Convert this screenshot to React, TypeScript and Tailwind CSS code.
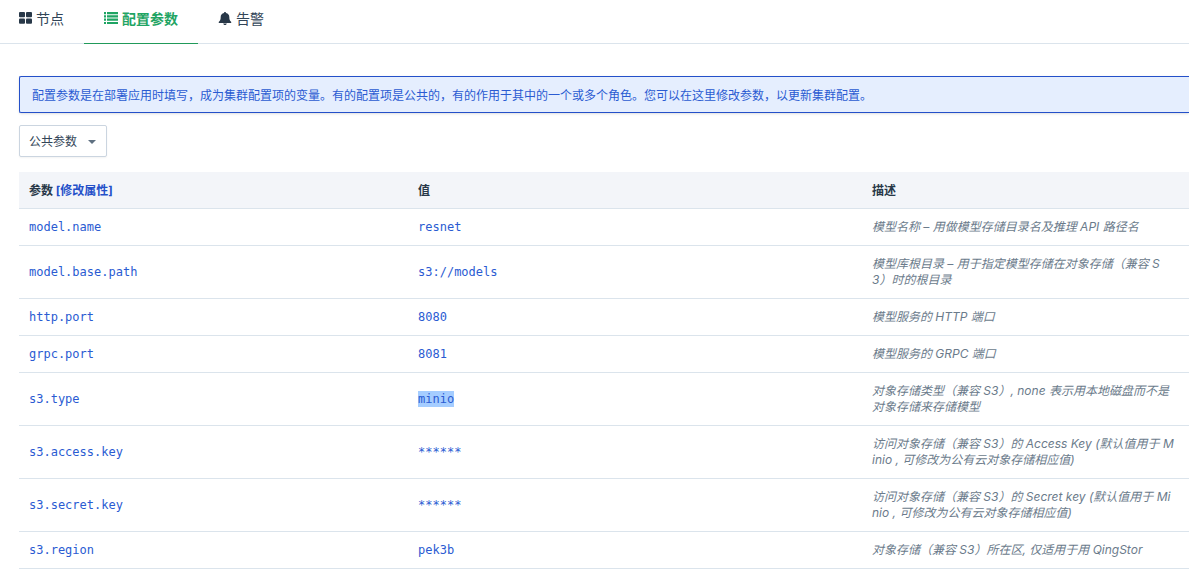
import { useState } from "react";

type Param = { name: string; value: string; desc: string; selected?: boolean };

const PARAMS: Param[] = [
  { name: "model.name", value: "resnet", desc: "模型名称 – 用做模型存储目录名及推理 API 路径名" },
  { name: "model.base.path", value: "s3://models", desc: "模型库根目录 – 用于指定模型存储在对象存储（兼容 S\n3）时的根目录" },
  { name: "http.port", value: "8080", desc: "模型服务的 HTTP 端口" },
  { name: "grpc.port", value: "8081", desc: "模型服务的 GRPC 端口" },
  { name: "s3.type", value: "minio", desc: "对象存储类型（兼容 S3）, none 表示用本地磁盘而不是对象存储来存储模型", selected: true },
  { name: "s3.access.key", value: "******", desc: "访问对象存储（兼容 S3）的 Access Key (默认值用于 Minio , 可修改为公有云对象存储相应值)" },
  { name: "s3.secret.key", value: "******", desc: "访问对象存储（兼容 S3）的 Secret key (默认值用于 Minio , 可修改为公有云对象存储相应值)" },
  { name: "s3.region", value: "pek3b", desc: "对象存储（兼容 S3）所在区, 仅适用于用 QingStor" },
];

const TABS = [
  { key: "nodes", label: "节点", icon: NodesIcon },
  { key: "params", label: "配置参数", icon: ListIcon },
  { key: "alarms", label: "告警", icon: BellIcon },
];

export default function App() {
  const [tab, setTab] = useState("params");
  const [role, setRole] = useState("common");

  return (
    <div className="min-h-screen overflow-x-hidden bg-white font-['Inter','Noto_Sans_CJK_SC',sans-serif] text-xs text-[#324558]">
      <nav className="flex border-b border-[#dbe4ec]">
        {TABS.map((t, i) => {
          const on = t.key === tab;
          return (
            <button
              key={t.key}
              type="button"
              onClick={() => setTab(t.key)}
              className={`-mb-px flex h-11 items-center gap-1 border-b pr-5 pb-[5px] text-sm ${i === 0 ? "pl-[18px]" : "pl-5"} ${
                on ? "border-[#219a5a] font-bold text-[#1fa463]" : "border-transparent"
              }`}
            >
              <t.icon />
              {t.label}
            </button>
          );
        })}
      </nav>

      <main className="pt-8 pl-[19px]">
        <p className="rounded-l-xs border border-r-0 border-[#2450c9] bg-[#e5eefe] px-3 pt-2.5 pb-2 leading-[17px] text-[#2a5bd2] shadow-sm">
          配置参数是在部署应用时填写，成为集群配置项的变量。有的配置项是公共的，有的作用于其中的一个或多个角色。您可以在这里修改参数，以更新集群配置。
        </p>

        <div className="relative mt-3 w-[88px]">
          <select
            aria-label="角色"
            value={role}
            onChange={(e) => setRole(e.target.value)}
            className="h-8 w-full appearance-none rounded-xs border border-[#cbd5e0] bg-white pt-0.5 pr-6 pl-[9px] shadow-xs"
          >
            <option value="common">公共参数</option>
          </select>
          <svg viewBox="0 0 8 4" className="pointer-events-none absolute top-[15px] right-[11px] h-1 w-2" fill="#5f7081">
            <path d="M0 0h8L4 4z" />
          </svg>
        </div>

        <table className="mt-[15px] w-full table-fixed border-collapse text-left leading-4">
          <colgroup>
            <col className="w-[33.25%]" />
            <col className="w-[38.8%]" />
            <col />
          </colgroup>
          <thead>
            <tr className="border-b border-[#dbe4ec] bg-[#f3f5f9] text-[#283848]">
              <th className="px-2.5 pt-[11px] pb-[9px] font-bold">
                参数 <a href="#edit" className="text-[#2450c9]">[修改属性]</a>
              </th>
              <th className="px-2.5 pt-[11px] pb-[9px] font-bold">值</th>
              <th className="px-2.5 pt-[11px] pb-[9px] font-bold">描述</th>
            </tr>
          </thead>
          <tbody>
            {PARAMS.map((p) => (
              <tr key={p.name} className="border-b border-[#dbe4ec]">
                <td className="p-2.5 font-['DejaVu_Sans_Mono',monospace] text-[#2a5bd2]">{p.name}</td>
                <td className="p-2.5 font-['DejaVu_Sans_Mono',monospace] text-[#2a5bd2]">
                  <span className={p.selected ? "block w-fit bg-[#a5cdff]" : "block w-fit"}>{p.value}</span>
                </td>
                <td className="py-2.5 pr-3.5 pl-2.5 break-all whitespace-pre-line text-[#6b7b8b] italic">{p.desc}</td>
              </tr>
            ))}
          </tbody>
        </table>
      </main>
    </div>
  );
}

function NodesIcon() {
  return (
    <svg viewBox="0 0 14 14" className="size-3.5" fill="#283848">
      <rect x="1" y="0" width="6" height="5.3" rx="1" />
      <rect x="8" y="0" width="6" height="5.3" rx="1" />
      <rect x="1" y="6.5" width="6" height="5.3" rx="1" />
      <rect x="8" y="6.5" width="6" height="5.3" rx="1" />
    </svg>
  );
}

function ListIcon() {
  return (
    <svg viewBox="0 0 14 14" className="size-3.5" fill="currentColor">
      <path d="M0 0h2v2.2H0zM3 0h11v2.2H3zM0 3.3h2v2.2H0zM3 3.3h11v2.2H3zM0 6.6h2v2.2H0zM3 6.6h11v2.2H3zM0 9.9h2v2.2H0zM3 9.9h11v2.2H3z" />
    </svg>
  );
}

function BellIcon() {
  return (
    <svg viewBox="0 0 14 14" className="size-3.5" fill="#283848">
      <path d="M7 0c.6 0 1 .4 1 1 2.2.4 3.3 2 3.3 3.9 0 2.8.6 3.8 1.8 4.8.5.5.2 1.3-.5 1.3H1.4c-.7 0-1-.8-.5-1.300C2.100 8.700 2.700 7.700 2.700 4.900 2.700 3 3.800 1.400 6 1c0-.6.4-1 1-1zM5.200 11.500h3.600c0 .9-.8 1.500-1.800 1.500s-1.800-.6-1.800-1.500z" />
    </svg>
  );
}
